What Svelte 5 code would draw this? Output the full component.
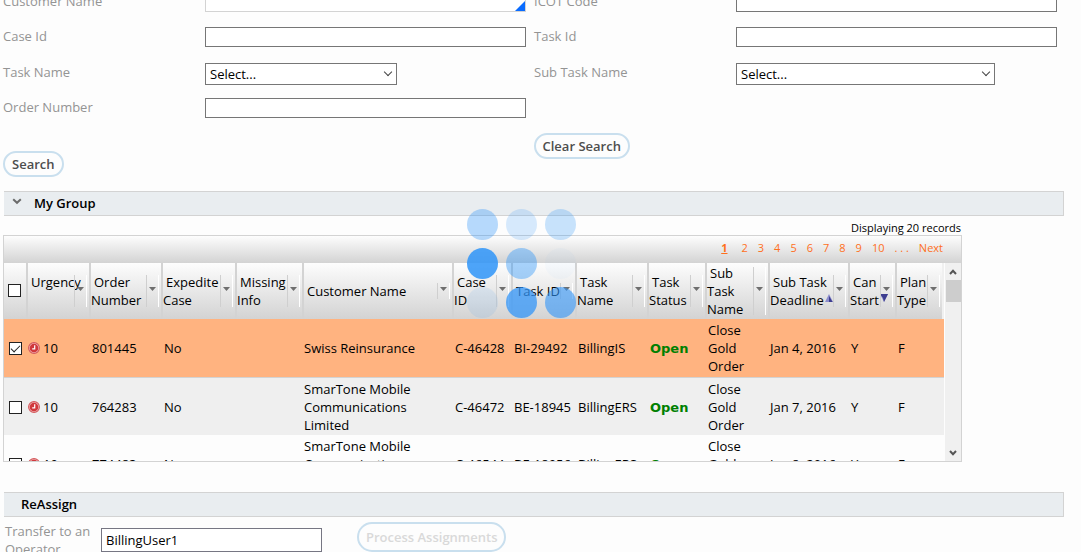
<script lang="ts">
  const columns = [
    { width: 24, lines: [] },
    { width: 63, lines: ['Urgency', '\u00a0'] },
    { width: 72, lines: ['Order', 'Number'] },
    { width: 74, lines: ['Expedite', 'Case'] },
    { width: 67, lines: ['Missing', 'Info'] },
    { width: 0, lines: ['Customer Name'] },
    { width: 59, lines: ['Case', 'ID'] },
    { width: 64, lines: ['Task ID'] },
    { width: 72, lines: ['Task', 'Name'] },
    { width: 58, lines: ['Task', 'Status'] },
    { width: 63, lines: ['Sub', 'Task', 'Name'] },
    { width: 80, lines: ['Sub Task', 'Deadline'], sort: 'up' },
    { width: 47, lines: ['Can', 'Start'], sort: 'down' },
    { width: 47, lines: ['Plan', 'Type'] }
  ];

  let rows = $state([
    { picked: true, order: '801445', customer: ['Swiss Reinsurance'], caseId: 'C-46428', task: 'BI-29492', name: 'BillingIS', due: 'Jan 4, 2016' },
    { picked: false, order: '764283', customer: ['SmarTone Mobile', 'Communications', 'Limited'], caseId: 'C-46472', task: 'BE-18945', name: 'BillingERS', due: 'Jan 7, 2016' },
    { picked: false, order: '774483', customer: ['SmarTone Mobile', 'Communications', 'Limited'], caseId: 'C-46544', task: 'BE-18956', name: 'BillingERS', due: 'Jan 8, 2016' }
  ]);

  const pages = [2, 3, 4, 5, 6, 7, 8, 9, 10];
  const dots = [0.35, 0.19, 0.26, 0.86, 0.42, 0.03, 0.1, 0.74, 0.6];
  let operator = $state('BillingUser1');
</script>

<main>
  <form class="search">
    <label for="customer">Customer Name</label>
    <div class="suggest"><input id="customer" type="text" /></div>
    <label class="second" for="icot">ICOT Code</label>
    <input id="icot" type="text" />

    <label for="case">Case Id</label>
    <input id="case" type="text" />
    <label class="second" for="task">Task Id</label>
    <input id="task" type="text" />

    <label for="taskname">Task Name</label>
    <div class="pick"><select id="taskname"><option>Select...</option></select></div>
    <label class="second" for="subtask">Sub Task Name</label>
    <div class="pick wide"><select id="subtask"><option>Select...</option></select></div>

    <label for="order">Order Number</label>
    <input id="order" type="text" />
  </form>

  <div class="actions">
    <button class="low" type="button">Search</button>
    <button type="button">Clear Search</button>
  </div>

  <h2>
    <svg width="10" height="7" viewBox="0 0 10 7"><path d="M1.2 1.2 5 4.8 8.8 1.2" fill="none" stroke="#6b6b6b" stroke-width="2" /></svg>
    My Group
  </h2>

  <section class="grid">
    <p class="count">Displaying 20 records</p>
    <div class="box">
      <nav>
        <a class="current" href="#1">1</a>
        {#each pages as page}<a href="#{page}">{page}</a>{/each}
        <span>. . .</span>
        <a href="#next">Next</a>
      </nav>
      <div class="view">
        <table>
          <colgroup>
            {#each columns as column}
              <col style:width={column.width ? `${column.width}px` : 'auto'} />
            {/each}
          </colgroup>
          <thead>
            <tr>
              {#each columns as column}
                <th>
                  {#if column.lines.length}
                    <div class="head">
                      <span class="title">
                        {#each column.lines as line, i}<span class="line" class:first={i === 0}>{line}{#if column.sort && i === 1}<svg class="sort" width="8" height="8" viewBox="0 0 8 8"><path d={column.sort === 'up' ? 'M4 0 8 8H0Z' : 'M0 0H8L4 8Z'} fill="#8b8ccc" /><path d={column.sort === 'up' ? 'M4 2 7.6 8H4Z' : 'M0 0H8L4 8 3 4Z'} fill="#3d3d8f" /></svg>{/if}</span>{/each}
                      </span>
                      <span class="filter" style:height="{column.lines.length * 16}px">
                        <svg width="7" height="4" viewBox="0 0 7 4"><path d="M0 0H7L3.5 4Z" fill="#6e6e6e" /></svg>
                      </span>
                    </div>
                  {:else}
                    <input type="checkbox" aria-label="Select all" />
                  {/if}
                </th>
              {/each}
            </tr>
          </thead>
          <tbody>
            {#each rows as row}
              <tr class:picked={row.picked}>
                <td class="tick"><input type="checkbox" aria-label="Select {row.order}" bind:checked={row.picked} /></td>
                <td class="flush">
                  <span class="urgent">
                    <svg width="12" height="12" viewBox="0 0 12 12">
                      <circle cx="6" cy="6" r="5.4" fill="#f3c0c1" stroke="#d4585b" stroke-width="1.1" />
                      <circle cx="6" cy="6" r="4.3" fill="#d0383c" />
                      <path d="M6.7 3.2V6.9H4.2" fill="none" stroke="#fff" stroke-width="1.2" />
                    </svg>
                    10
                  </span>
                </td>
                <td>{row.order}</td>
                <td>No</td>
                <td></td>
                <td class="flush">{#each row.customer as part}<span class="line">{part}</span>{/each}</td>
                <td>{row.caseId}</td>
                <td>{row.task}</td>
                <td>{row.name}</td>
                <td class="open">Open</td>
                <td><span class="line">Close</span><span class="line">Gold</span><span class="line">Order</span></td>
                <td class="flush">{row.due}</td>
                <td>Y</td>
                <td>F</td>
              </tr>
            {/each}
          </tbody>
        </table>
        <div class="bar">
          <svg width="8" height="6" viewBox="0 0 8 6"><path d="M1 5 4 1.8 7 5" fill="none" stroke="#555" stroke-width="2" /></svg>
          <span class="thumb"></span>
          <svg width="8" height="6" viewBox="0 0 8 6"><path d="M1 1 4 4.2 7 1" fill="none" stroke="#555" stroke-width="2" /></svg>
        </div>
      </div>
    </div>
  </section>

  <h2 class="plain">ReAssign</h2>
  <div class="assign">
    <label for="operator">Transfer to an Operator</label>
    <input id="operator" type="text" bind:value={operator} />
    <button type="button" disabled>Process Assignments</button>
  </div>

  <div class="spinner">
    {#each dots as dot}<i style:opacity={dot}></i>{/each}
  </div>
</main>

<style>
  :global(body) {
    margin: 0;
    background: #fdfdfd;
    overflow: hidden;
  }
  main {
    position: relative;
    padding: 0 17px 0 3px;
    height: 100vh;
    overflow: hidden;
    box-sizing: border-box;
    font: 13px/18px 'Open Sans', sans-serif;
    color: #000;
  }
  input,
  select,
  button {
    font: inherit;
    color: inherit;
    box-sizing: border-box;
    margin: 0;
  }
  label {
    color: #949494;
  }
  .search {
    display: grid;
    grid-template-columns: 202px 1fr 210px 1fr;
    grid-template-rows: 34px 36px 36px 34px;
    align-items: center;
    margin-top: -15px;
    padding-right: 7px;
  }
  .search label {
    padding-bottom: 3px;
  }
  .second {
    padding-left: 8px;
  }
  input[type='text'] {
    width: 100%;
    height: 20px;
    padding: 0 4px;
    border: 1px solid #767676;
    border-radius: 0;
    background: #fff;
  }
  .suggest {
    position: relative;
    display: flex;
  }
  .suggest input[type='text'] {
    border-color: #d3d3d3;
  }
  .suggest::after {
    content: '';
    position: absolute;
    right: 1px;
    bottom: 1px;
    border-left: 10px solid transparent;
    border-bottom: 10px solid #0a6cff;
  }
  .pick {
    position: relative;
    display: flex;
    width: 192px;
    margin-top: 2px;
  }
  .pick.wide {
    width: 259px;
  }
  .pick::after {
    content: '';
    position: absolute;
    right: 6px;
    top: 6px;
    width: 5px;
    height: 5px;
    border: solid #444;
    border-width: 0 1px 1px 0;
    transform: rotate(45deg);
  }
  select {
    width: 100%;
    height: 22px;
    padding: 0 4px;
    border: 1px solid #767676;
    border-radius: 0;
    background: #fff;
    appearance: none;
  }
  button {
    height: 26px;
    padding: 0 7px;
    border: 2px solid #c9dfee;
    border-radius: 13px;
    background: #fdfdfd;
    color: #4d4d4d;
    font-weight: 600;
    white-space: nowrap;
  }
  .actions {
    display: grid;
    grid-template-columns: 1fr 1fr;
    justify-items: start;
    height: 44px;
    margin: 8px 0 14px;
  }
  .low {
    align-self: end;
  }
  h2 {
    display: flex;
    align-items: center;
    gap: 12px;
    box-sizing: border-box;
    height: 25px;
    margin: 0 0 0 1px;
    padding: 0 0 2px 8px;
    border: 1px solid #d3d3d3;
    border-left: 0;
    background: #e9edf0;
    font-size: 13px;
    font-weight: 600;
  }
  h2 svg {
    margin-bottom: 2px;
  }
  .plain {
    padding-left: 17px;
  }
  .grid {
    margin: 3px 102px 30px 0;
  }
  .count {
    margin: 0;
    height: 16px;
    padding-right: 1px;
    text-align: right;
    font-size: 11px;
  }
  .box {
    border: 1px solid #d3d3d3;
  }
  nav {
    display: flex;
    justify-content: flex-end;
    align-items: center;
    gap: 10px;
    height: 27px;
    padding: 0 18px 4px 0;
    box-sizing: border-box;
    background: linear-gradient(#fdfdfd, #d3d3d3);
    font-size: 11px;
    color: #ff6f1c;
  }
  nav a {
    color: inherit;
    text-decoration: none;
  }
  nav .current {
    margin-right: 4px;
    font-weight: 700;
    text-decoration: underline;
  }
  .view {
    display: flex;
    height: 198px;
    overflow: hidden;
  }
  table {
    flex: 1;
    width: 0;
    height: max-content;
    table-layout: fixed;
    border-collapse: separate;
    border-spacing: 0;
  }
  th {
    height: 56px;
    padding: 0 0 1px;
    border-right: 2px solid #d3d3d3;
    box-sizing: border-box;
    background: linear-gradient(#fdfdfd, #d3d3d3);
    font-weight: 400;
    text-align: left;
  }
  th:first-child {
    padding-left: 4px;
  }
  th:last-child {
    border-right-color: #f0f0f0;
  }
  .head {
    display: flex;
    align-items: center;
    white-space: nowrap;
  }
  .title {
    flex: 1;
    width: 0;
  }
  .line {
    display: block;
  }
  .first {
    padding-left: 3px;
  }
  .sort {
    margin-left: 1px;
    vertical-align: 3px;
  }
  .filter {
    display: flex;
    align-items: center;
    justify-content: center;
    flex: none;
    box-sizing: border-box;
    width: 13px;
    padding-bottom: 4px;
    margin-right: 2px;
    border-left: 1px solid #cfcfcf;
    border-right: 1px solid #fff;
  }
  td {
    height: 54px;
    padding: 2px 0 2px 1px;
    white-space: nowrap;
    vertical-align: middle;
  }
  tr:nth-child(even) td {
    padding-bottom: 1px;
  }
  td.flush {
    padding-left: 0;
  }
  td.tick {
    padding-left: 5px;
  }
  td.open {
    height: 50px;
    padding-top: 4px;
    font-family: 'DejaVu Sans', sans-serif;
    font-weight: 700;
    color: #008000;
  }
  tbody tr:nth-child(even) {
    background: #efefef;
  }
  tbody tr:first-child td {
    border-bottom: 1px solid #d3d3d3;
  }
  tbody .picked {
    background: #ffb380;
  }
  .urgent {
    display: flex;
    align-items: center;
    gap: 3px;
  }
  input[type='checkbox'] {
    display: block;
    width: 13px;
    height: 13px;
    appearance: none;
    border: 1px solid #222;
    background: #fff;
  }
  input[type='checkbox']:checked::after {
    content: '';
    display: block;
    width: 9px;
    height: 5px;
    margin: 2px 0 0 1px;
    border: solid #222;
    border-width: 0 0 1px 1px;
    box-sizing: border-box;
    transform: rotate(-45deg);
  }
  .bar {
    display: flex;
    flex-direction: column;
    align-items: center;
    width: 16px;
    padding: 6px 0 5px;
    box-sizing: border-box;
    background: #f0f0f0;
    margin-left: 1px;
  }
  .thumb {
    width: 15px;
    height: 22px;
    margin: 5px 0 auto;
    background: #cdcdcd;
  }
  .assign {
    display: flex;
    align-items: flex-start;
    padding: 5px 0 0 2px;
  }
  .assign label {
    flex: none;
    width: 96px;
  }
  .assign input[type='text'] {
    flex: none;
    width: 221px;
    height: 24px;
    margin: 6px 35px 0 0;
    border-color: #767683;
  }
  .assign button {
    height: 30px;
    border-radius: 15px;
    color: #d9d9d9;
  }
  .spinner {
    position: absolute;
    left: 467px;
    top: 209px;
    display: grid;
    grid-template-columns: repeat(3, 31px);
    gap: 8px;
  }
  .spinner i {
    height: 31px;
    border-radius: 50%;
    background: #3095f8;
  }
</style>
